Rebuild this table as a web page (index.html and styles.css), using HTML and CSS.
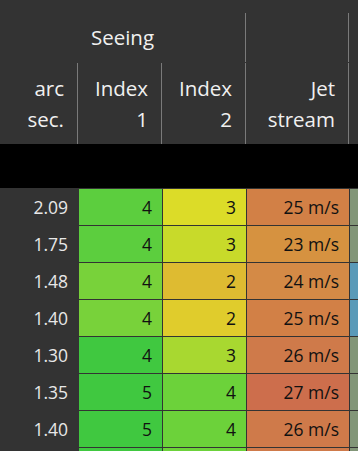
FILE: index.html
```html
<!DOCTYPE html>
<html lang="en">
<head>
<meta charset="utf-8">
<title>Seeing forecast</title>
<link rel="stylesheet" href="styles.css">
</head>
<body>
<div class="table">
  <div class="row head-top">
    <div class="hcell group">Seeing</div>
    <div class="hcell line"></div>
    <div class="hcell line"></div>
  </div>
  <div class="row head">
    <div class="hcell line"><span>arc<br>sec.</span></div>
    <div class="hcell line"><span>Index<br>1</span></div>
    <div class="hcell line"><span>Index<br>2</span></div>
    <div class="hcell line"><span>Jet<br>stream</span></div>
    <div class="hcell line"></div>
  </div>
  <div class="band"></div>
  <div class="row data">
    <div class="dcell plain">2.09</div>
    <div class="dcell g1">4</div>
    <div class="dcell y1">3</div>
    <div class="dcell o1">25 m/s</div>
    <div class="dcell s1"></div>
  </div>
  <div class="row data">
    <div class="dcell plain">1.75</div>
    <div class="dcell g1">4</div>
    <div class="dcell y2">3</div>
    <div class="dcell o2">23 m/s</div>
    <div class="dcell s1"></div>
  </div>
  <div class="row data">
    <div class="dcell plain">1.48</div>
    <div class="dcell g2">4</div>
    <div class="dcell y3">2</div>
    <div class="dcell o3">24 m/s</div>
    <div class="dcell s2"></div>
  </div>
  <div class="row data">
    <div class="dcell plain">1.40</div>
    <div class="dcell g2">4</div>
    <div class="dcell y4">2</div>
    <div class="dcell o1">25 m/s</div>
    <div class="dcell s2"></div>
  </div>
  <div class="row data">
    <div class="dcell plain">1.30</div>
    <div class="dcell g3">4</div>
    <div class="dcell y5">3</div>
    <div class="dcell o4">26 m/s</div>
    <div class="dcell s1"></div>
  </div>
  <div class="row data">
    <div class="dcell plain">1.35</div>
    <div class="dcell g3">5</div>
    <div class="dcell y6">4</div>
    <div class="dcell o5">27 m/s</div>
    <div class="dcell s1"></div>
  </div>
  <div class="row data">
    <div class="dcell plain">1.40</div>
    <div class="dcell g3">5</div>
    <div class="dcell y6">4</div>
    <div class="dcell o4">26 m/s</div>
    <div class="dcell s1"></div>
  </div>
  <div class="row data">
    <div class="dcell plain"></div>
    <div class="dcell g3"></div>
    <div class="dcell y6"></div>
    <div class="dcell o4"></div>
    <div class="dcell s1"></div>
  </div>
</div>
</body>
</html>
```
FILE: styles.css
```css
html, body {
  margin: 0;
  padding: 0;
  background: #333333;
  overflow: hidden;
}

body {
  font-family: "Open Sans", "Noto Sans", sans-serif;
  color: #f0f0f0;
}

.table {
  display: flex;
  flex-direction: column;
  padding-top: 13px;
}

.row {
  display: grid;
  grid-template-columns: 78px 84px 84px 103px 1fr;
}

.hcell {
  box-sizing: border-box;
  font-size: 20.5px;
  text-align: right;
  padding-right: 13px;
}

.hcell.line {
  border-right: 1px solid #7a7a7a;
}

.head-top {
  height: 49px;
}

.head-top .group {
  grid-column: 1 / span 3;
  border-right: 1px solid #7a7a7a;
  text-align: center;
  padding: 0;
  line-height: 49px;
}

.head {
  margin-top: 1px;
  height: 81px;
}

.head .hcell {
  display: flex;
  align-items: flex-start;
  justify-content: flex-end;
  padding-top: 10px;
  line-height: 31px;
}

.band {
  height: 44px;
  background: #000000;
}

.data {
  height: 37px;
}

.dcell {
  box-sizing: border-box;
  border-top: 1px solid #333333;
  border-left: 1px solid #333333;
  font-size: 17.5px;
  line-height: 36px;
  text-align: right;
  padding-right: 10px;
  color: #111111;
}

.dcell.plain {
  color: #e8e8e8;
  background: #333333;
}

.g1 { background: #5cce3e; }
.g2 { background: #78d23a; }
.g3 { background: #40c840; }

.y1 { background: #dcdc28; }
.y2 { background: #c8da2a; }
.y3 { background: #debb31; }
.y4 { background: #e0cc2c; }
.y5 { background: #a8d830; }
.y6 { background: #6cd23a; }

.o1 { background: #d28046; }
.o2 { background: #d69240; }
.o3 { background: #d48a46; }
.o4 { background: #cf7a4a; }
.o5 { background: #cd6e4c; }

.s1 { background: #829678; }
.s2 { background: #5a9ab8; }
```
